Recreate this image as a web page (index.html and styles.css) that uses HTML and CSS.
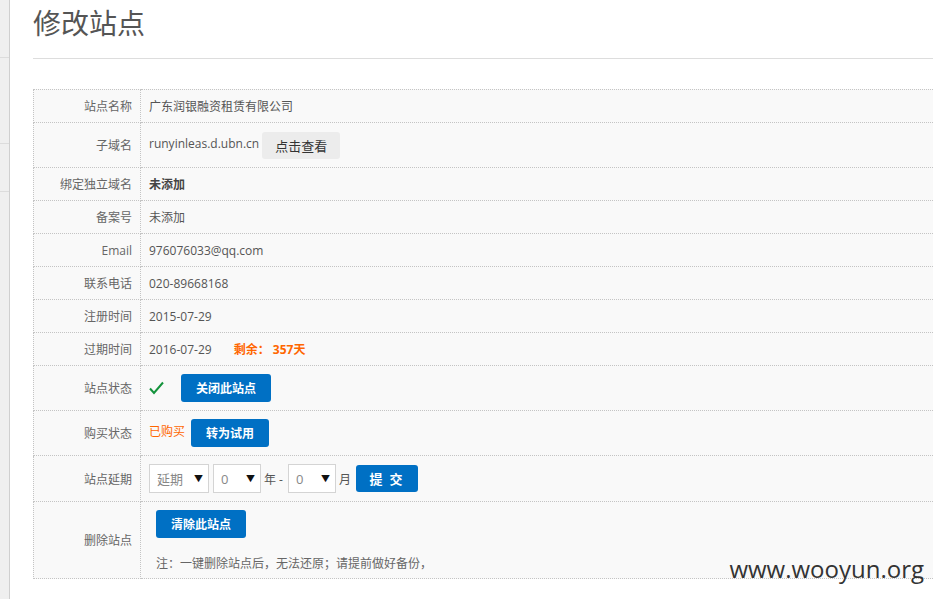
FILE: index.html
```html
<!DOCTYPE html>
<html lang="zh-CN">
<head>
    <meta charset="UTF-8">
    <title>修改站点</title>
    <link rel="stylesheet" href="styles.css">
</head>
<body>
    <div class="layout">
        <div class="sidebar">
            <div class="side-item tall"></div>
            <div class="side-item mid"></div>
            <div class="side-item short"></div>
        </div>
        <div class="main">
            <h1 class="page-title">修改站点</h1>

            <table class="form-table">
                <tr class="row">
                    <td class="label">站点名称</td>
                    <td class="value">广东润银融资租赁有限公司</td>
                </tr>
                <tr class="row row-btn">
                    <td class="label">子域名</td>
                    <td class="value"><span class="domain">runyinleas.d.ubn.cn</span><a class="btn btn-gray" href="#">点击查看</a></td>
                </tr>
                <tr class="row">
                    <td class="label">绑定独立域名</td>
                    <td class="value"><strong>未添加</strong></td>
                </tr>
                <tr class="row">
                    <td class="label">备案号</td>
                    <td class="value">未添加</td>
                </tr>
                <tr class="row">
                    <td class="label">Email</td>
                    <td class="value">976076033@qq.com</td>
                </tr>
                <tr class="row">
                    <td class="label">联系电话</td>
                    <td class="value">020-89668168</td>
                </tr>
                <tr class="row">
                    <td class="label">注册时间</td>
                    <td class="value">2015-07-29</td>
                </tr>
                <tr class="row">
                    <td class="label">过期时间</td>
                    <td class="value">2016-07-29 <span class="remain">剩余： 357天</span></td>
                </tr>
                <tr class="row row-btn">
                    <td class="label">站点状态</td>
                    <td class="value">
                        <svg class="check" width="15" height="14" viewBox="0 0 15 14"><path d="M1 7.5 L5 12 L14 1.5" fill="none" stroke="#14933c" stroke-width="2"/></svg>
                        <a class="btn btn-blue btn-close" href="#">关闭此站点</a>
                    </td>
                </tr>
                <tr class="row row-btn">
                    <td class="label">购买状态</td>
                    <td class="value"><span class="bought">已购买</span><a class="btn btn-blue btn-trial" href="#">转为试用</a></td>
                </tr>
                <tr class="row row-sel">
                    <td class="label">站点延期</td>
                    <td class="value">
                        <div class="extend">
                            <span class="select-wrap wide"><select class="select"><option>延期</option></select></span>
                            <span class="select-wrap"><select class="select"><option>0</option></select></span>
                            <span class="unit">年 -</span>
                            <span class="select-wrap"><select class="select"><option>0</option></select></span>
                            <span class="unit">月</span>
                            <a class="btn btn-blue btn-submit" href="#">提 交</a>
                        </div>
                    </td>
                </tr>
                <tr class="row row-del">
                    <td class="label">删除站点</td>
                    <td class="value del-cell">
                        <a class="btn btn-blue btn-clear" href="#">清除此站点</a>
                        <p class="note">注：一键删除站点后，无法还原；请提前做好备份，</p>
                    </td>
                </tr>
            </table>
        </div>
    </div>
    <div class="watermark">www.wooyun.org</div>
</body>
</html>
```

FILE: styles.css
```css
html, body {
    margin: 0;
    height: 100%;
    overflow: hidden;
}

body {
    font-family: "Open Sans", "Noto Sans CJK SC", sans-serif;
    font-size: 12px;
    color: #555;
    background: #fff;
}

.layout {
    display: flex;
    height: 100%;
}

.sidebar {
    width: 9px;
    flex-shrink: 0;
    background: #efefef;
    border-right: 1px solid #cfcfcf;
}

.side-item {
    border-bottom: 1px solid #dcdcdc;
}

.side-item.tall { height: 57px; }
.side-item.mid { height: 85px; }
.side-item.short { height: 47px; }

.main {
    flex: 1;
    padding-left: 23px;
    min-width: 0;
}

.page-title {
    margin: 0;
    height: 58px;
    border-bottom: 1px solid #ddd;
    font-family: "Noto Sans CJK SC", sans-serif;
    font-weight: normal;
    font-size: 28px;
    line-height: 45px;
    color: #555;
}

.form-table {
    margin-top: 30px;
    width: 920px;
    border-collapse: collapse;
    background: #f9f9f9;
}

.form-table td {
    border: 1px dotted #c4c4c4;
    padding: 0 8px;
    vertical-align: middle;
}

.row { height: 33px; }
.row-btn { height: 45px; }
.row-sel { height: 46px; }
.row-del { height: 77px; }

.label {
    width: 90px;
    text-align: right;
    color: #666;
}

.value strong {
    color: #444;
}

.domain {
    margin-right: 3px;
}

.btn {
    display: inline-block;
    vertical-align: middle;
    text-decoration: none;
    text-align: center;
    border-radius: 3px;
    font-family: "Noto Sans CJK SC", sans-serif;
}

.btn-gray {
    width: 78px;
    height: 27px;
    line-height: 27px;
    background: #ececec;
    color: #333;
    font-size: 13px;
}

.btn-blue {
    height: 28px;
    line-height: 28px;
    background: #0070c4;
    color: #fff;
    font-weight: bold;
    font-size: 12px;
}

.btn-close { width: 90px; margin-left: 14px; }
.btn-trial { width: 78px; margin-left: 6px; }
.btn-submit { width: 62px; height: 27px; line-height: 27px; letter-spacing: 2px; font-size: 13px; }
.btn-clear { width: 90px; }

.check {
    vertical-align: middle;
}

.remain {
    margin-left: 19px;
    color: #f60;
    font-weight: bold;
}

.bought {
    color: #f60;
}

.extend {
    display: flex;
    align-items: center;
    gap: 3px;
}

.select-wrap {
    position: relative;
    display: inline-block;
}

.select-wrap.wide {
    margin-right: 1px;
}

.select-wrap::after {
    content: "▼";
    position: absolute;
    right: 6px;
    top: 8px;
    font-size: 9px;
    color: #111;
    pointer-events: none;
}

.select {
    appearance: none;
    -webkit-appearance: none;
    display: block;
    width: 48px;
    height: 29px;
    border: 1px solid #d4d4d4;
    border-radius: 0;
    background: #fff;
    padding: 0 0 0 7px;
    font-family: "Open Sans", "Noto Sans CJK SC", sans-serif;
    font-size: 13px;
    color: #888;
}

.select-wrap.wide .select { width: 60px; }

.unit {
    margin-right: 2px;
    color: #555;
    font-size: 12px;
}

.form-table .del-cell {
    padding-left: 15px;
}

.note {
    margin: 16px 0 0;
    color: #666;
    font-family: "Noto Sans CJK SC", sans-serif;
}

.watermark {
    position: absolute;
    right: 9px;
    bottom: 14px;
    font-family: "Open Sans", sans-serif;
    font-size: 24px;
    color: #333;
}
```
